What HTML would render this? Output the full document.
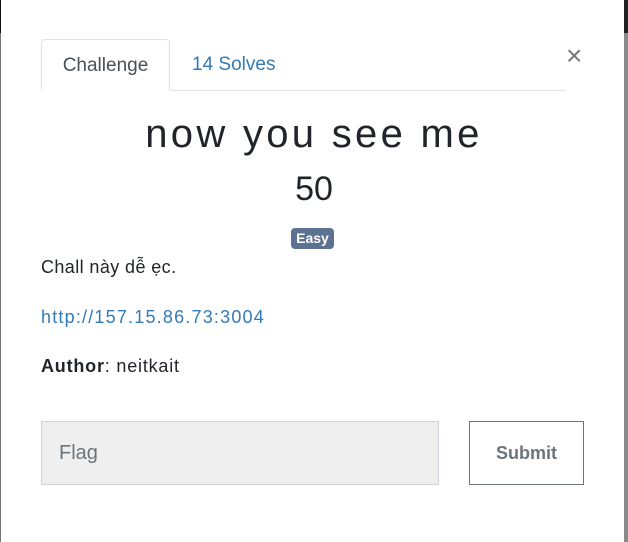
<!DOCTYPE html>
<html><head><meta charset="utf-8"><style>
*{box-sizing:border-box;margin:0;padding:0}
body{width:628px;height:542px;background:#fff;position:relative;overflow:hidden;font-family:"Liberation Sans",sans-serif;color:#212529}
.edgeL{position:absolute;left:0;top:0;width:1px;height:542px;background:#777}
.edgeL2{position:absolute;left:0;top:0;width:1px;height:33px;background:#111}
.edgeR{position:absolute;left:624px;top:0;width:4px;height:542px;background:#8a8a8a}
.edgeR2{position:absolute;left:624px;top:0;width:4px;height:33px;background:#222}
.tabline{position:absolute;left:41px;top:90px;width:525px;height:1px;background:#dee2e6}
.tab{position:absolute;left:41px;top:39px;width:129px;height:52px;border:1px solid #dee2e6;border-bottom:1px solid #fff;border-radius:4px 4px 0 0;background:#fff;font-size:19px;color:#495057;text-align:center;line-height:52px}
.tab2{position:absolute;left:192px;top:39px;font-size:19px;color:#337ab7;line-height:52px}
.x{position:absolute;left:566px;top:40px;font-size:28px;color:#777}
h1{position:absolute;left:0;width:628px;text-align:center;top:112px;font-size:40px;font-weight:normal;letter-spacing:3.3px;color:#212529}
.pts{position:absolute;left:0;width:628px;text-align:center;top:170px;font-size:34px}
.badge{position:absolute;left:291px;top:228px;width:43px;height:21px;background:#5b7290;border-radius:4px;color:#fff;font-weight:bold;font-size:14px;text-align:center;line-height:21px}
.p{position:absolute;left:41px;font-size:18px}
a{color:#337ab7;text-decoration:none}
.inp{position:absolute;left:41px;top:421px;width:398px;height:64px;background:#efefef;border:1px solid #ced4da;font-size:20px;color:#6c757d;padding-left:17px;line-height:62px}
.btn{position:absolute;left:469px;top:421px;width:115px;height:64px;border:1px solid #6c757d;font-size:18px;font-weight:bold;color:#6c757d;text-align:center;line-height:62px}
</style></head><body>
<div class="edgeL"></div><div class="edgeL2"></div><div class="edgeR"></div><div class="edgeR2"></div>
<div class="tabline"></div>
<div class="tab">Challenge</div>
<div class="tab2">14 Solves</div>
<div class="x">×</div>
<h1>now you see me</h1>
<div class="pts">50</div>
<div class="badge">Easy</div>
<div class="p" style="top:257px;letter-spacing:0.4px">Chall này dễ ẹc.</div>
<div class="p" style="top:307px;letter-spacing:1.2px"><a>http://157.15.86.73:3004</a></div>
<div class="p" style="top:356px;letter-spacing:0.8px"><b>Author</b>: neitkait</div>
<div class="inp">Flag</div>
<div class="btn">Submit</div>
</body></html>
